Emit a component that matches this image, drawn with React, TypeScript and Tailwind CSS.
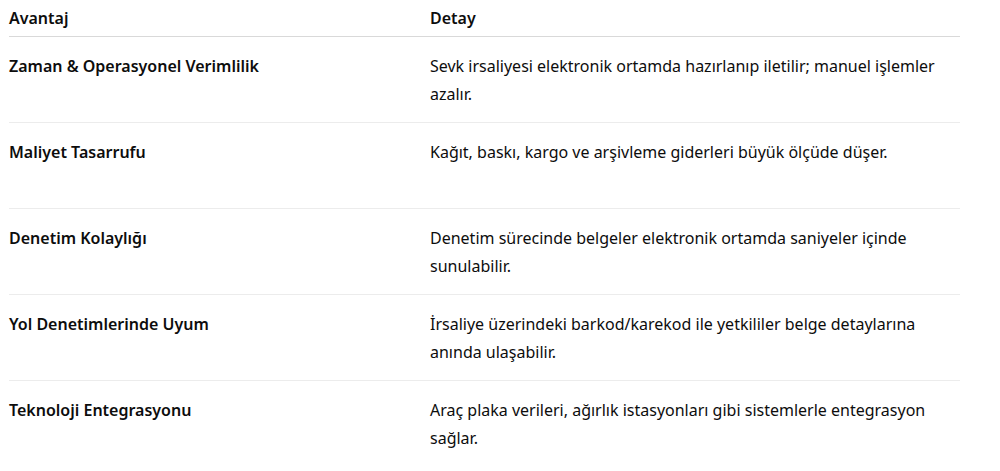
const rows = [
  {
    title: "Zaman & Operasyonel Verimlilik",
    detail: ["Sevk irsaliyesi elektronik ortamda hazırlanıp iletilir; manuel işlemler", "azalır."],
  },
  {
    title: "Maliyet Tasarrufu",
    detail: ["Kağıt, baskı, kargo ve arşivleme giderleri büyük ölçüde düşer."],
  },
  {
    title: "Denetim Kolaylığı",
    detail: ["Denetim sürecinde belgeler elektronik ortamda saniyeler içinde", "sunulabilir."],
  },
  {
    title: "Yol Denetimlerinde Uyum",
    detail: ["İrsaliye üzerindeki barkod/karekod ile yetkililer belge detaylarına", "anında ulaşabilir."],
  },
  {
    title: "Teknoloji Entegrasyonu",
    detail: ["Araç plaka verileri, ağırlık istasyonları gibi sistemlerle entegrasyon", "sağlar."],
  },
]

export default function App() {
  return (
    <div className="min-h-[471px] bg-white pl-[9px] text-[#0d0d0d] font-['Noto_Sans',sans-serif] text-[16px]">
      <div className="w-[951px]">
        <div className="grid grid-cols-[421px_1fr] h-[37px] items-center border-b border-[#d9d9d9] font-semibold">
          <div>Avantaj</div>
          <div>Detay</div>
        </div>
        {rows.map((row, i) => (
          <div
            key={i}
            className={`grid grid-cols-[421px_1fr] h-[86px] pt-[15px] leading-[28px] ${i < rows.length - 1 ? "border-b border-[#ececec]" : ""}`}
          >
            <div className="font-semibold">{row.title}</div>
            <div className="whitespace-nowrap">
              {row.detail.map((line, j) => (
                <div key={j}>{line}</div>
              ))}
            </div>
          </div>
        ))}
      </div>
    </div>
  )
}
